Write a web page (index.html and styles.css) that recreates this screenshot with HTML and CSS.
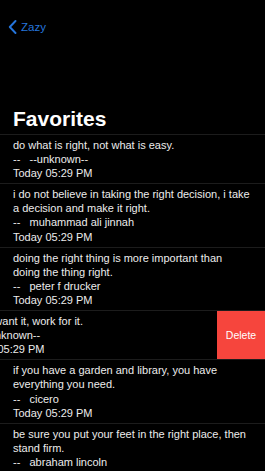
FILE: index.html
```html
<!DOCTYPE html>
<html lang="en">
<head>
  <meta charset="UTF-8" />
  <title>Favorites</title>
  <link rel="stylesheet" href="styles.css">
</head>
<body>
  <div id="nav">
    <a class="back" href="#">
      <svg width="9" height="14" viewBox="0 0 9 14"><polyline points="7.5,1 1.8,7 7.5,13" fill="none" stroke="#2575dc" stroke-width="1.9" stroke-linecap="round" stroke-linejoin="round"/></svg>
      <span>Zazy</span>
    </a>
  </div>

  <h1 id="title">Favorites</h1>

  <div id="list">
    <div class="row">
      <div class="quote">
        <div>do what is right, not what is easy.</div>
        <div class="author">--   --unknown--</div>
        <div>Today 05:29 PM</div>
      </div>
    </div>
    <div class="row">
      <div class="quote">
        <div>i do not believe in taking the right decision, i take a decision and make it right.</div>
        <div class="author">--   muhammad ali jinnah</div>
        <div>Today 05:29 PM</div>
      </div>
    </div>
    <div class="row">
      <div class="quote">
        <div>doing the right thing is more important than doing the thing right.</div>
        <div class="author">--   peter f drucker</div>
        <div>Today 05:29 PM</div>
      </div>
    </div>
    <div class="row swiped">
      <div class="quote">
        <div>if you want it, work for it.</div>
        <div class="author">--   --unknown--</div>
        <div>Today 05:29 PM</div>
      </div>
      <button class="delete">Delete</button>
    </div>
    <div class="row">
      <div class="quote">
        <div>if you have a garden and library, you have everything you need.</div>
        <div class="author">--   cicero</div>
        <div>Today 05:29 PM</div>
      </div>
    </div>
    <div class="row">
      <div class="quote">
        <div>be sure you put your feet in the right place, then stand firm.</div>
        <div class="author">--   abraham lincoln</div>
        <div>Today 05:29 PM</div>
      </div>
    </div>
  </div>
</body>
</html>
```

FILE: styles.css
```css
body {
  margin: 0;
  background: #000;
  font-family: "Liberation Sans", Arial, sans-serif;
  color: #ececec;
  overflow: hidden;
}
#nav {
  height: 54px;
  display: flex;
  align-items: center;
  padding-left: 8px;
}
.back {
  display: flex;
  align-items: center;
  gap: 4px;
  color: #2575dc;
  text-decoration: none;
  font-size: 11.5px;
}
#title {
  margin: 52px 0 0 13px;
  font-size: 21px;
  line-height: 25px;
  font-weight: bold;
  color: #fff;
}
#list {
  margin-top: 3px;
  border-top: 1px solid #1c1c1c;
}
.row {
  display: flex;
  overflow: hidden;
  border-bottom: 1px solid #1c1c1c;
}
.quote {
  flex: 0 0 100%;
  box-sizing: border-box;
  padding: 3px 14px 3px 13px;
  font-size: 11px;
  line-height: 14.1px;
}
.author {
  white-space: pre-wrap;
}
.swiped .quote {
  margin-left: -48px;
}
.delete {
  flex: 0 0 48px;
  border: none;
  margin: 0;
  padding: 0;
  background: #f6453d;
  color: #fff;
  font-family: "Liberation Sans", Arial, sans-serif;
  font-size: 10.5px;
}
```
